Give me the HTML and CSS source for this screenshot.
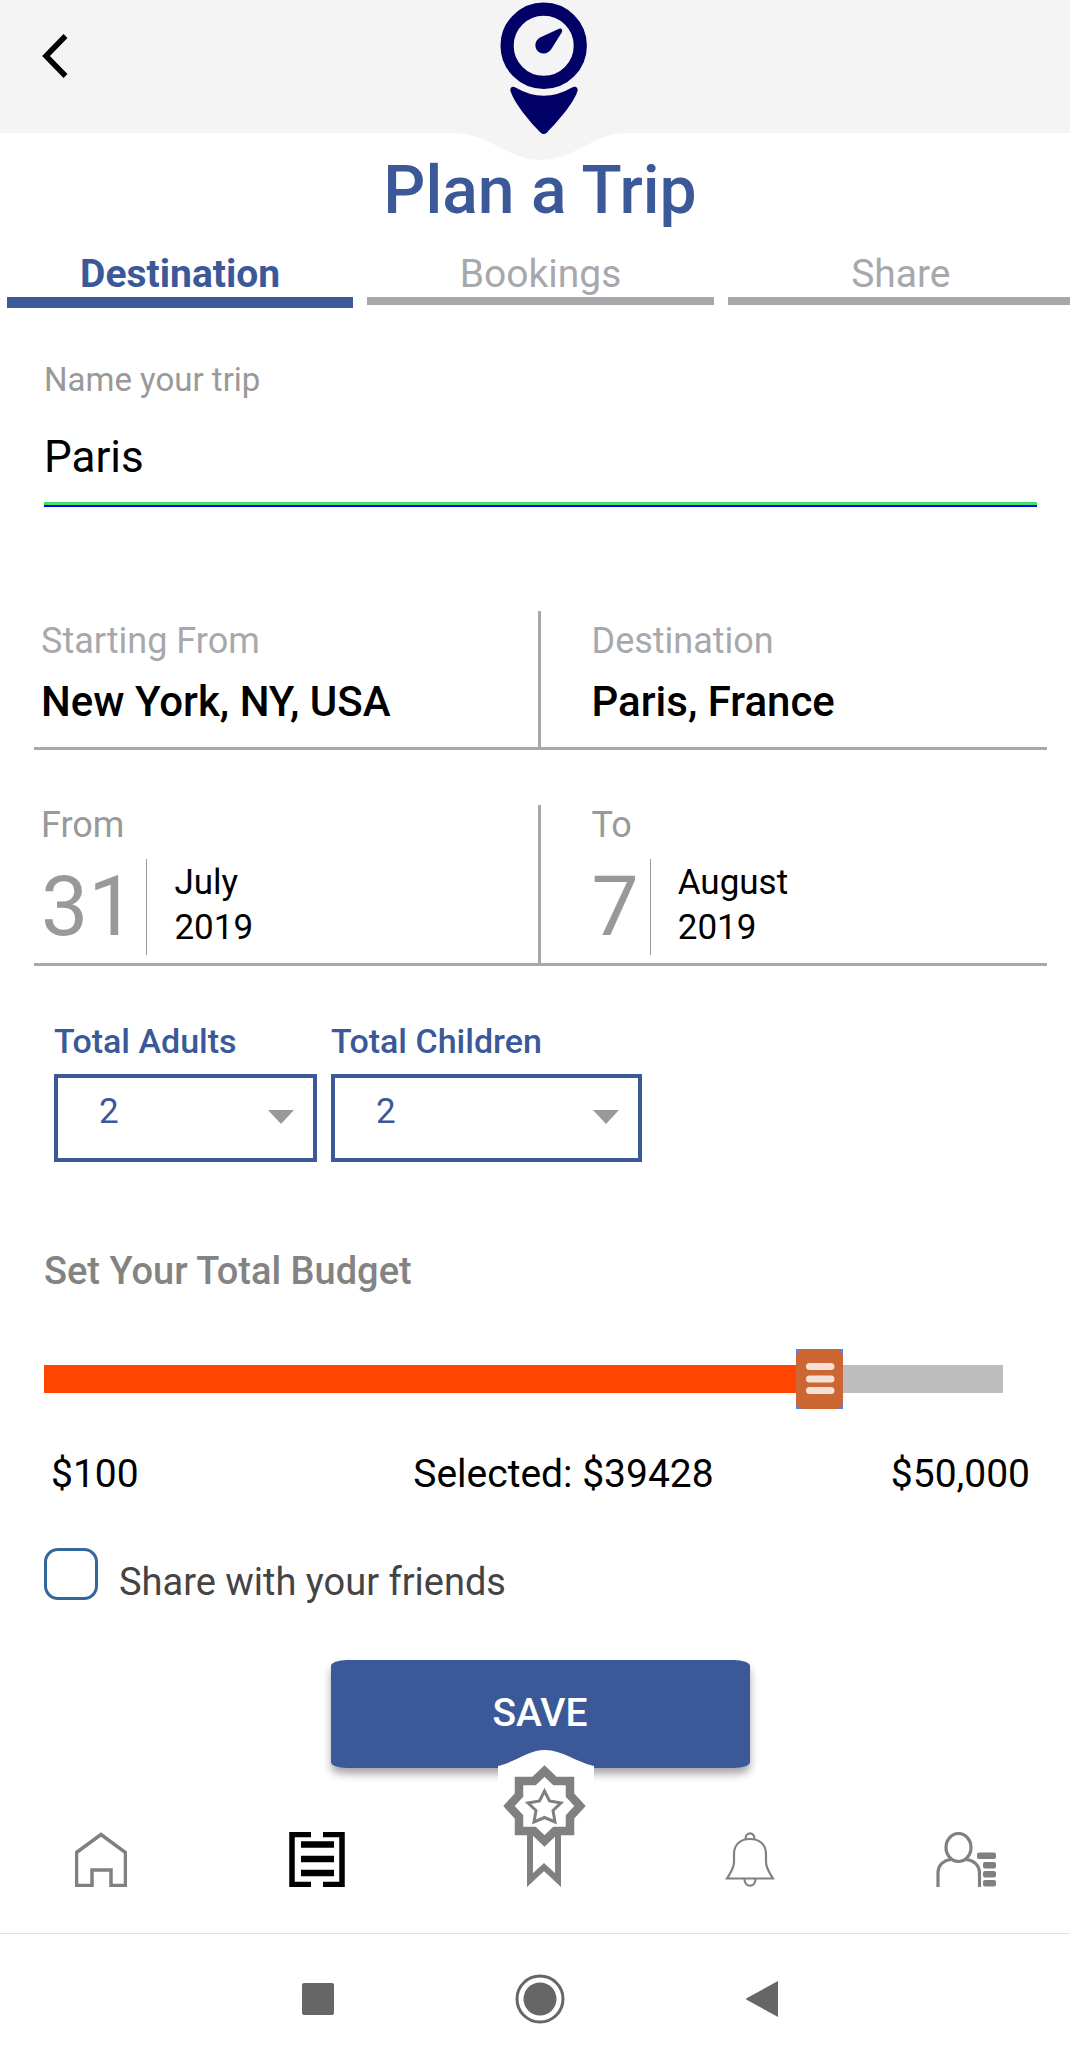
FILE: index.html
```html
<!doctype html>
<html lang="en">
<head>
<meta charset="utf-8">
<meta name="viewport" content="width=device-width, initial-scale=1">
<title>Plan a Trip</title>
<link rel="stylesheet" href="styles.css">
</head>
<body>
<div class="app">
	<header class="header">
		<button class="back" type="button" aria-label="Back">
			<svg width="26" height="44" viewBox="0 0 26 44"><path d="M23.500 2 4 22 23.500 42" fill="none" stroke="#000" stroke-width="5.500"/></svg>
		</button>
		<svg class="logo" width="190" height="160" viewBox="0 0 190 160">
			<path class="notch" d="M0 0H190V133H180C150 133 128 160 96 160S42 133 10 133H0z"/>
			<circle cx="98.700" cy="45.700" r="36.600" fill="none" stroke="#000066" stroke-width="13.200"/>
			<path fill="#000066" d="M113.500 29C116 27.500 118 29.500 117 32L107 48C104 54.500 95 55.500 91.500 49.500C89 44.500 91 40 95 37.500z"/>
			<path fill="#000066" d="M65.500 91C64.500 87.500 67.500 85.500 70.500 87.500Q98.700 104 127 87.500C130.500 85.500 133.500 88 132.500 91C128 105 110 124 102 132.500Q98.700 135.500 95.500 132.500C87 124 70 105 65.500 91z"/>
		</svg>
	</header>

	<h1 class="title">Plan a Trip</h1>

	<nav class="tabs">
		<a class="ac" href="#destination">Destination</a>
		<a href="#bookings">Bookings</a>
		<a href="#share">Share</a>
	</nav>

	<form class="trip">
		<div class="name">
			<label for="tripName">Name your trip</label>
			<div class="name-line"><input id="tripName" type="text" value="Paris"></div>
		</div>

		<div class="row places">
			<div class="cell">
				<label for="start">Starting From</label>
				<input id="start" type="text" value="New York, NY, USA">
			</div>
			<div class="cell">
				<label for="dest">Destination</label>
				<input id="dest" type="text" value="Paris, France">
			</div>
		</div>

		<div class="row dates">
			<div class="cell">
				<span class="cap">From</span>
				<div class="date">
					<span class="day">31</span>
					<span class="month">July<br>2019</span>
				</div>
			</div>
			<div class="cell">
				<span class="cap">To</span>
				<div class="date">
					<span class="day">7</span>
					<span class="month">August<br>2019</span>
				</div>
			</div>
		</div>

		<div class="people">
			<div class="adults">
				<label for="adults">Total Adults</label>
				<div class="pick">
					<select id="adults"><option>1</option><option selected>2</option><option>3</option></select>
				</div>
			</div>
			<div class="children">
				<label for="children">Total Children</label>
				<div class="pick">
					<select id="children"><option>1</option><option selected>2</option><option>3</option></select>
				</div>
			</div>
		</div>

		<div class="budget">
			<label for="budget">Set Your Total Budget</label>
			<input id="budget" type="range" min="100" max="47800" value="39428" style="--fill:82%">
			<div class="amounts">
				<span>$100</span>
				<span>Selected: $39428</span>
				<span>$50,000</span>
			</div>
		</div>

		<div class="friends">
			<input id="friends" type="checkbox">
			<label for="friends">Share with your friends</label>
		</div>

		<button class="save" type="submit">SAVE</button>
	</form>

	<nav class="menu">
		<a href="#home" aria-label="Home">
			<svg width="52" height="55" viewBox="0 0 52 55"><path d="M1.500 20.500 26 2.500 50.500 20.500V53.500H36V38H17V53.500H1.500z" fill="none" stroke="#808080" stroke-width="3.500"/></svg>
		</a>
		<a href="#trips" aria-label="Trips">
			<svg width="56" height="55" viewBox="0 0 56 55">
				<path d="M22 2.500H3V52.500H22M34 2.500H53V52.500H34" fill="none" stroke="#000" stroke-width="5.500"/>
				<path d="M12 12.500H45M12 27H45M12 41H45" stroke="#000" stroke-width="6.500"/>
			</svg>
		</a>
		<span></span>
		<a href="#alerts" aria-label="Alerts">
			<svg width="50" height="55" viewBox="0 0 50 55" fill="none" stroke="#808080" stroke-width="2.200">
				<path d="M2 46.500C6 40 9 36 9 30V22C9 12 16 7 25 7S41 12 41 22V30C41 36 44 40 48 46.500z"/>
				<path d="M20.500 7C20.500 -0.500 29.500 -0.500 29.500 7M19.500 47C19.500 56 30.500 56 30.500 47"/>
			</svg>
		</a>
		<a href="#profile" aria-label="Profile">
			<svg width="60" height="55" viewBox="0 0 60 55">
				<g fill="none" stroke="#808080" stroke-width="3.200">
					<ellipse cx="22.500" cy="15.500" rx="12.500" ry="14"/>
					<path d="M2 55V41C2 33 8 28 15 27.500M30 27.500C37 28 43.500 33 43.500 41V55"/>
				</g>
				<g fill="#808080">
					<rect x="41" y="20.500" width="19" height="6.500" rx="2"/>
					<rect x="47" y="30" width="13" height="6.500" rx="2"/>
					<rect x="47" y="39" width="13" height="6.500" rx="2"/>
					<rect x="47" y="48" width="13" height="6.500" rx="2"/>
				</g>
			</svg>
		</a>
		<a class="badge" href="#rewards" aria-label="Rewards">
			<svg width="96" height="138" viewBox="0 0 96 138">
				<path d="M0 16C18 12 30 0 47 0S78 12 96 16V138H0z" fill="#fff"/>
				<g fill="none" stroke="#808080">
					<path d="M32 84V130L46 117 60 130V84" stroke-width="6"/>
					<path d="M46.500 21 57 31H72V45L82 56 72 67V81H57L46.500 91 36 81H21V67L11 56 21 45V31H36z" stroke-width="8.500" fill="#fff"/>
					<path d="M46.500 41 51.500 51 63 53 55 60.500 57 72 46.500 67.500 36 72 38 60.500 30 53 41.500 51z" stroke-width="3"/>
				</g>
			</svg>
		</a>
	</nav>

	<!-- android buttons -->
	<div class="system">
		<button type="button" aria-label="Recent apps"><svg width="32" height="32"><rect width="32" height="32" rx="2" fill="#666"/></svg></button>
		<button type="button" aria-label="Home screen"><svg width="50" height="50"><circle cx="25" cy="25" r="23" fill="none" stroke="#666" stroke-width="3"/><circle cx="25" cy="25" r="16.500" fill="#666"/></svg></button>
		<button type="button" aria-label="Go back"><svg width="32" height="38"><path d="M32 1V37L1 20Q-1 19 1 18z" fill="#666"/></svg></button>
	</div>
</div>
</body>
</html>
```
FILE: styles.css
```css
*{ margin:0; padding:0; box-sizing:border-box}
body{ background:#fff; color:#000; font-family:Roboto,"Liberation Sans",sans-serif; overflow-x:hidden}
a{ text-decoration:none; color:inherit}
button,input,select{ font-family:inherit; border:0; background:none; outline:none; border-radius:0}
svg{ display:block}
label,.cap{ display:block}
.app{ width:calc(100% + 10px)}

.header{ position:relative; height:133px; background:#f4f4f4}
.back{ padding:34px 42px}
.logo{ position:absolute; left:50%; top:0; margin-left:-95px}
.notch{ fill:#f4f4f4}

.title{ margin-top:18px; font-size:66px; line-height:80px; font-weight:500; text-align:center; color:#3b5998}

.tabs{ display:grid; grid-template-columns:repeat(3,1fr); gap:14px; align-items:start; margin-top:20px; padding:0 6px 0 7px}
.tabs a{ font-size:39px; line-height:46px; text-align:center; color:#a7a8ac; border-bottom:8px solid #a7a8ac}
.tabs .ac{ color:#3b5998; font-weight:700; border-bottom:11px solid #3b5998}

.name{ margin-top:52px; padding:0 43px 0 44px}
.name label{ font-size:33px; line-height:40px; color:#999}
.name-line{ margin-top:27px; border-bottom:2px solid #0000ff}
.name input{ display:block; width:100%; height:78px; padding-bottom:16px; font-size:44px; border-bottom:3px solid #3fe06c}

.row{ display:grid; grid-template-columns:1fr 1fr; margin:0 33px 0 34px; border-bottom:3px solid #a7a8ac}
.row label,.cap{ font-size:36px; line-height:40px; color:#a7a8ac}
.cell{ min-width:0; padding-left:51px}
.cell:first-child{ padding-left:7px; border-right:3px solid #a7a8ac}
.places{ margin-top:104px}
.places .cell{ padding-top:10px; padding-bottom:21px}
.places input{ display:block; width:100%; height:50px; margin-top:15px; font-size:42px; font-weight:500}
.dates{ margin-top:55px}
.dates .cell{ padding-bottom:8px}
.dates .cap{ color:#999}
.date{ display:flex; margin-top:14px}
.day{ padding-right:11px; font-size:84px; line-height:96px; color:#999; border-right:1px solid #999}
.month{ padding:1px 0 0 27px; font-size:35px; line-height:45px}

.people{ display:flex; gap:14px; margin:55px 54px 0; color:#3b5998}
.people label{ font-size:34px; line-height:40px; font-weight:500}
.adults{ width:263px}
.children{ width:311px}
.pick{ position:relative; margin-top:13px}
.pick select{ display:block; width:100%; height:88px; padding:0 60px 14px 41px; font-size:35px; color:#3b5998; border:4px solid #3b5998; appearance:none}
.pick:after{ content:""; position:absolute; right:23px; top:36px; border:13px solid transparent; border-top:14px solid #999; border-bottom:0; pointer-events:none}

.budget{ margin-top:87px; padding:0 50px 0 44px}
.budget label{ font-size:38px; line-height:44px; font-weight:500; color:#838383}
.budget input{ display:block; width:calc(100% - 27px); height:60px; margin-top:56px; appearance:none}
.budget input::-webkit-slider-runnable-track{ height:28px; background:linear-gradient(to right,#ff4500 var(--fill),#bdbdbd var(--fill))}
.budget input::-webkit-slider-thumb{ appearance:none; width:47px; height:60px; margin-top:-16px; background:url("data:image/svg+xml,%3Csvg xmlns='http://www.w3.org/2000/svg' width='47' height='60'%3E%3Crect width='47' height='60' fill='%234c86ff'/%3E%3Crect width='47' height='60' rx='7' fill='%23cc6633'/%3E%3Cpath d='M13.500 17.500H35M13.500 30H35M13.500 41.500H35' stroke='%23f5e0d6' stroke-width='7' stroke-linecap='round'/%3E%3C/svg%3E")}
.amounts{ display:flex; margin-top:42px; padding-left:7px; font-size:39px; line-height:46px}
.amounts span:first-child{ flex:0 0 37%}
.amounts span:last-child{ margin-left:auto}

.friends{ display:flex; align-items:flex-start; gap:21px; margin:51px 44px 0}
.friends input{ width:54px; height:52px; border:3px solid #336699; border-radius:14px; appearance:none}
.friends label{ margin-top:12px; font-size:38px; line-height:44px; color:#444}

.save{ display:block; width:419px; height:108px; margin:56px auto 0; padding-bottom:2px; font-size:39px; font-weight:500; color:#fff; background:#3b5998; border-radius:16px / 6px; box-shadow:0 6px 8px rgba(0,0,0,.35)}

.menu{ position:relative; display:grid; grid-template-columns:repeat(5,1fr); justify-items:center; margin:0 6px 0 -7px; padding:64px 0 46px; border-bottom:1px solid #e0e0e0}
.badge{ position:absolute; left:50%; top:-18px; margin-left:-36px}

.system{ display:grid; grid-template-columns:repeat(3,222px); justify-content:center; justify-items:center; align-items:center; padding:40px 0 38px}
```
